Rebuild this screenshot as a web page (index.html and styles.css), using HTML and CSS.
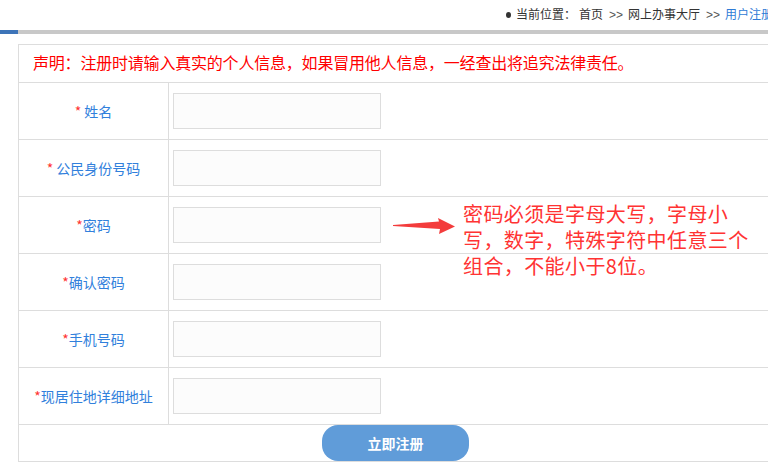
FILE: index.html
```html
<!DOCTYPE html>
<html>
<head>
  <meta charset="utf-8">
  <meta name="viewport" content="width=device-width,initial-scale=1.0">
  <title>用户注册</title>
  <link rel="stylesheet" href="styles.css">
</head>
<body>
  <div class="page">
    <div class="topbar">
      <div class="crumbs">
        <span class="dot"></span><span class="here">当前位置：</span><a href="#">首页</a><span class="sep">&gt;&gt;</span><a href="#">网上办事大厅</a><span class="sep">&gt;&gt;</span><a href="#" class="current">用户注册</a>
      </div>
    </div>
    <div class="rule"><span class="rule-accent"></span></div>

    <form class="reg-form" action="">
      <div class="notice">声明：注册时请输入真实的个人信息，如果冒用他人信息，一经查出将追究法律责任。</div>

      <div class="row">
        <label class="label"><i>*</i>&nbsp;姓名</label>
        <div class="field"><input type="text"></div>
      </div>
      <div class="row">
        <label class="label"><i>*</i>&nbsp;公民身份号码</label>
        <div class="field"><input type="text"></div>
      </div>
      <div class="row">
        <label class="label"><i>*</i>密码</label>
        <div class="field">
          <input type="password">
          <div class="hint">
            <svg class="arrow" width="62" height="16" viewBox="0 0 62 16">
              <polygon points="0,7 46,3.5 45,0 62,8.5 46,16 47,11 0,8" fill="#f33c3c"/>
            </svg>
            <p class="hint-text">密码必须是字母大写，字母小写，数字，特殊字符中任意三个组合，不能小于8位。</p>
          </div>
        </div>
      </div>
      <div class="row">
        <label class="label"><i>*</i>确认密码</label>
        <div class="field"><input type="password"></div>
      </div>
      <div class="row">
        <label class="label"><i>*</i>手机号码</label>
        <div class="field"><input type="text"></div>
      </div>
      <div class="row">
        <label class="label"><i>*</i>现居住地详细地址</label>
        <div class="field"><input type="text"></div>
      </div>

      <div class="submit-row">
        <button type="submit" class="submit-btn">立即注册</button>
      </div>
    </form>
  </div>
</body>
</html>
```

FILE: styles.css
```css
html, body { margin: 0; padding: 0; overflow: hidden; background: #fff; }
body { font-family: "Liberation Sans", "Noto Sans CJK SC", sans-serif; color: #333; }

.page { width: 780px; }

.topbar {
  height: 30px;
  display: flex;
  align-items: center;
  justify-content: flex-end;
  padding-right: 7px;
}
.crumbs { font-size: 12px; white-space: nowrap; color: #333; line-height: 14px; }
.crumbs a { color: #333; text-decoration: none; }
.crumbs a.current { color: #2e7bd6; }
.crumbs .here { margin-right: 3px; }
.crumbs .sep { margin: 0 5px 0 6px; color: #555; }
.dot {
  display: inline-block;
  width: 5px;
  height: 6px;
  border-radius: 50%;
  background: #333;
  margin: 0 5px 1px 0;
  vertical-align: middle;
}

.rule { height: 4px; background: #c8c8c8; }
.rule-accent { display: block; width: 18px; height: 4px; background: #3d74b8; }

.reg-form {
  width: 755px;
  margin: 10px 0 0 18px;
  border: 1px solid #ddd;
  box-sizing: border-box;
  font-family: "Noto Sans CJK SC", sans-serif;
}

.notice {
  height: 38px;
  box-sizing: border-box;
  border-bottom: 1px solid #ddd;
  padding: 0 0 4px 14px;
  display: flex;
  align-items: center;
  color: #f00;
  font-size: 16px;
  letter-spacing: -0.2px;
}

.row {
  display: grid;
  grid-template-columns: 150px 1fr;
  height: 57px;
  box-sizing: border-box;
  border-bottom: 1px solid #ddd;
}
.label {
  border-right: 1px solid #ddd;
  display: flex;
  align-items: center;
  justify-content: center;
  font-size: 14px;
  color: #3180dc;
}
.label i { font-style: normal; color: #f33; }

.field {
  position: relative;
  display: flex;
  align-items: center;
  padding-left: 4px;
}
.field input {
  width: 208px;
  height: 36px;
  box-sizing: border-box;
  border: 1px solid #ddd;
  background: #fcfcfc;
  margin: 0;
  outline: none;
}

.hint {
  position: absolute;
  left: 224px;
  top: 4px;
  display: flex;
  gap: 8px;
}
.arrow { margin-top: 17px; flex-shrink: 0; }
.hint-text {
  margin: 0;
  width: 296px;
  font-size: 20px;
  line-height: 26px;
  letter-spacing: 0.4px;
  color: #f33;
}

.submit-row { display: flex; justify-content: center; height: 36px; }
.submit-btn {
  width: 147px;
  height: 36px;
  border: none;
  border-radius: 16px;
  background: #609cd9;
  color: #fff;
  font-family: "Noto Sans CJK SC", sans-serif;
  font-size: 14px;
  font-weight: bold;
  cursor: pointer;
}
```
